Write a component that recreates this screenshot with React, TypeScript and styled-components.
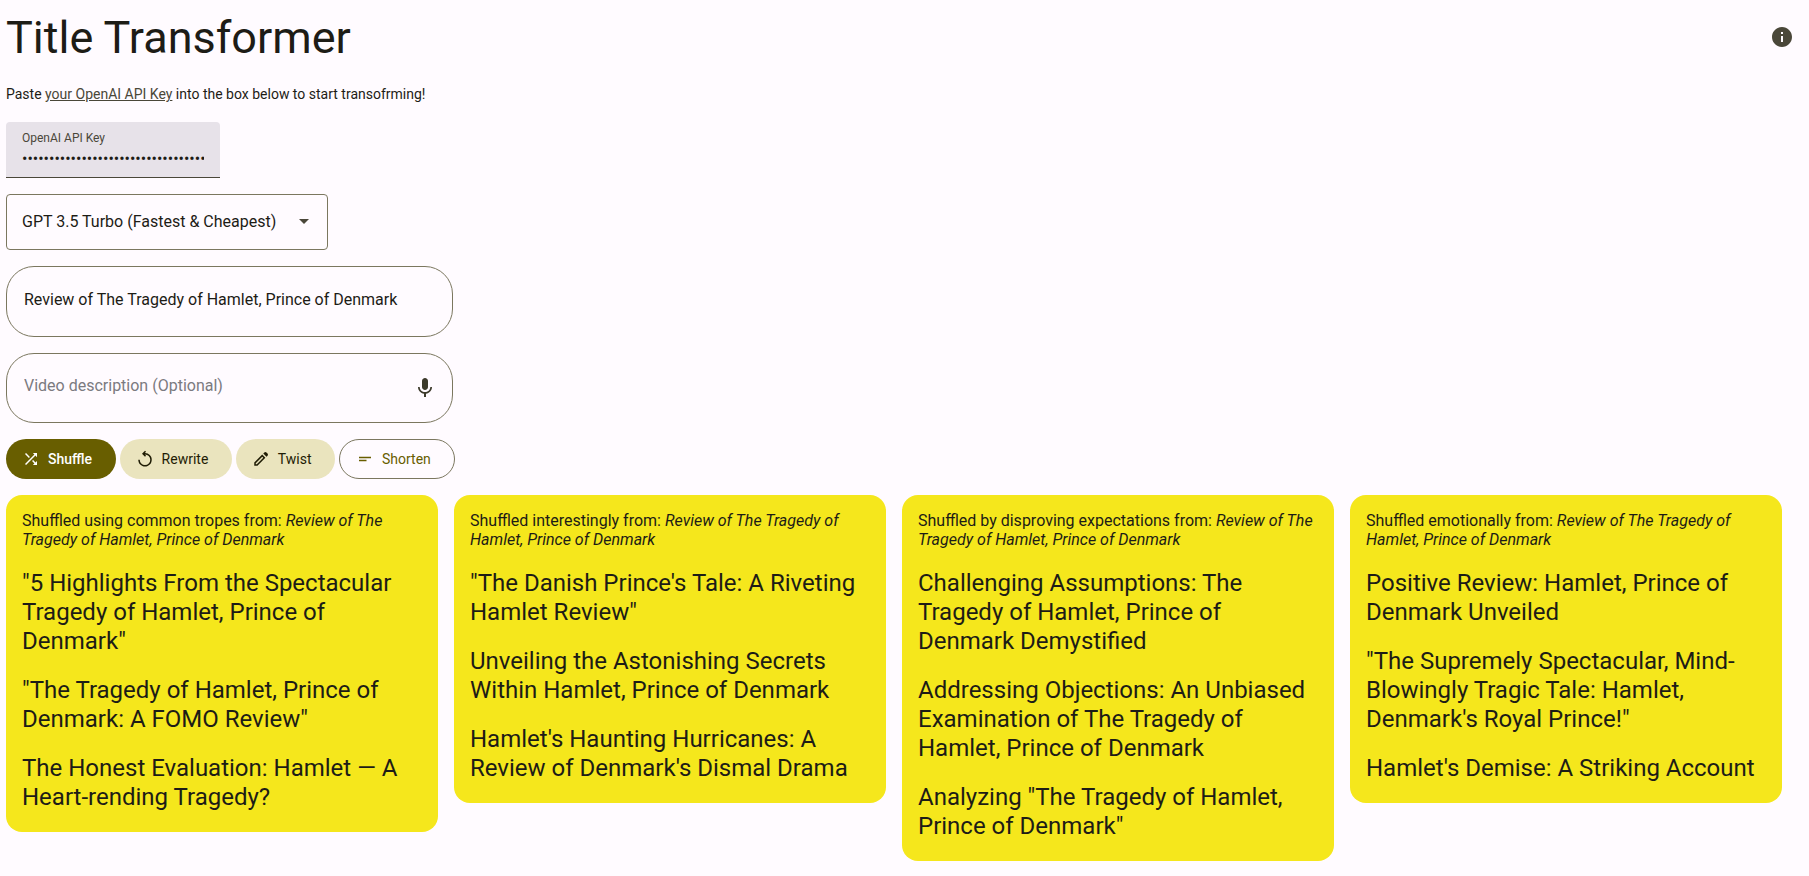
import React from 'react';
import styled, { createGlobalStyle } from 'styled-components';
import { MdArrowDropDown, MdInfo, MdMic, MdShortText, MdShuffle } from 'react-icons/md';

const GlobalStyle = createGlobalStyle`
  html, body {
    margin: 0;
    background: #fffbff;
    color: #1d1c16;
    font-family: Roboto, "Liberation Sans", sans-serif;
  }
  * { box-sizing: border-box; }
`;

const Page = styled.div`
  position: relative;
  display: flex;
  flex-direction: column;
  align-items: flex-start;
  padding: 6px;
  min-height: 876px;
`;

const Title = styled.h1`
  margin: 6px 0 0;
  font-size: 45px;
  line-height: 52px;
  font-weight: 400;
`;

const Intro = styled.p`
  margin: 20px 0 0;
  font-size: 14px;
  line-height: 20px;
  color: #1d1c16;

  a {
    color: #4a4739;
  }
`;

const FilledField = styled.label`
  display: flex;
  flex-direction: column;
  width: 214px;
  height: 56px;
  margin-top: 18px;
  padding: 8px 16px 0;
  background: #e7e2e9;
  border-radius: 4px 4px 0 0;
  border-bottom: 1px solid #4a4739;
`;

const FilledLabel = styled.span`
  font-size: 12px;
  line-height: 16px;
  color: #4a4739;
`;

const FilledInput = styled.input`
  width: 100%;
  margin-top: 1px;
  padding: 0;
  border: 0;
  outline: 0;
  background: transparent;
  font-family: inherit;
  font-size: 16px;
  line-height: 24px;
  color: #1d1c16;
`;

const Select = styled.div`
  display: flex;
  align-items: center;
  justify-content: space-between;
  width: 322px;
  height: 56px;
  margin-top: 16px;
  padding: 0 11px 2px 15px;
  border: 1px solid #7b775f;
  border-radius: 4px;
  font-size: 16px;
`;

const SelectArrow = styled(MdArrowDropDown)`
  color: #4a4739;
`;

const PillField = styled.div<{ $short?: boolean }>`
  display: flex;
  align-items: center;
  width: 447px;
  height: ${(p) => (p.$short ? 70 : 71)}px;
  margin-top: 16px;
  padding: 0 15px 0 17px;
  border: 1px solid #7b775f;
  border-radius: 28px;
`;

const PillInput = styled.input<{ $lift: number }>`
  flex: 1;
  min-width: 0;
  padding: 0 0 ${(p) => p.$lift}px;
  border: 0;
  outline: 0;
  background: transparent;
  font-family: inherit;
  font-size: 16px;
  line-height: 24px;
  color: #1d1c16;

  &::placeholder {
    color: #7b7a80;
    opacity: 1;
  }
`;

const MicIcon = styled(MdMic)`
  color: #3c3a2b;
`;

const ChipRow = styled.div`
  display: flex;
  gap: 4px;
  margin-top: 16px;
`;

const Chip = styled.button<{ $variant: 'selected' | 'tonal' | 'outlined' }>`
  display: flex;
  align-items: center;
  gap: 8px;
  height: 40px;
  padding: 0 23.5px 0 16px;
  border-radius: 20px;
  font-family: inherit;
  font-size: 14px;
  font-weight: ${(p) => (p.$variant === 'selected' ? 500 : 400)};
  background: ${(p) =>
    p.$variant === 'selected' ? '#685e00' : p.$variant === 'tonal' ? '#eae4be' : 'transparent'};
  color: ${(p) =>
    p.$variant === 'selected' ? '#ffffff' : p.$variant === 'tonal' ? '#1f1c05' : '#685e00'};
  border: ${(p) => (p.$variant === 'outlined' ? '1px solid #7b775f' : '0')};
`;

const Cards = styled.div`
  display: flex;
  align-items: flex-start;
  gap: 16px;
  margin-top: 16px;
`;

const Card = styled.section`
  width: 432px;
  padding: 16px 16px 20px;
  background: #f5e71c;
  border-radius: 16px;
`;

const Source = styled.p`
  margin: 0;
  font-size: 16px;
  line-height: 19.2px;
`;

const Result = styled.p`
  margin: 20px 0 0;
  font-size: 24px;
  line-height: 29px;
`;

const InfoButton = styled.div`
  position: absolute;
  top: 25px;
  right: 15px;
  display: flex;
  color: #4a4739;
`;

const RewriteIcon = () => (
  <svg width="18" height="18" viewBox="0 0 24 24" fill="currentColor">
    <path d="M12 22q-1.875 0-3.512-.712-1.638-.713-2.85-1.926-1.213-1.212-1.926-2.85Q3 14.875 3 13h2q0 2.925 2.038 4.962Q9.075 20 12 20t4.962-2.038Q19 15.925 19 13t-2.038-4.962Q14.925 6 12 6h-.15l1.55 1.55L12 9 8 5l4-4 1.4 1.45L11.85 4H12q1.875 0 3.512.712 1.638.713 2.85 1.926 1.213 1.212 1.926 2.85Q21 11.125 21 13t-.712 3.512q-.713 1.638-1.926 2.85-1.212 1.213-2.85 1.926Q13.875 22 12 22Z" />
  </svg>
);

const TwistIcon = () => (
  <svg width="18" height="18" viewBox="0 0 24 24" fill="currentColor">
    <path d="M5 19h1.4l8.625-8.625-1.4-1.4L5 17.6ZM19.3 8.925l-4.25-4.2 1.4-1.4q.575-.575 1.413-.575.837 0 1.412.575l1.4 1.4q.575.575.6 1.388.025.812-.55 1.387ZM17.85 10.4 7.25 21H3v-4.25l10.6-10.6Z" />
  </svg>
);

const source = 'Review of The Tragedy of Hamlet, Prince of Denmark';

const columns = [
  {
    lead: 'Shuffled using common tropes from:',
    titles: [
      '"5 Highlights From the Spectacular Tragedy of Hamlet, Prince of Denmark"',
      '"The Tragedy of Hamlet, Prince of Denmark: A FOMO Review"',
      'The Honest Evaluation: Hamlet — A Heart-rending Tragedy?',
    ],
  },
  {
    lead: 'Shuffled interestingly from:',
    titles: [
      '"The Danish Prince\'s Tale: A Riveting Hamlet Review"',
      'Unveiling the Astonishing Secrets Within Hamlet, Prince of Denmark',
      "Hamlet's Haunting Hurricanes: A Review of Denmark's Dismal Drama",
    ],
  },
  {
    lead: 'Shuffled by disproving expectations from:',
    titles: [
      'Challenging Assumptions: The Tragedy of Hamlet, Prince of Denmark Demystified',
      'Addressing Objections: An Unbiased Examination of The Tragedy of Hamlet, Prince of Denmark',
      'Analyzing "The Tragedy of Hamlet, Prince of Denmark"',
    ],
  },
  {
    lead: 'Shuffled emotionally from:',
    titles: [
      'Positive Review: Hamlet, Prince of Denmark Unveiled',
      '"The Supremely Spectacular, Mind-Blowingly Tragic Tale: Hamlet, Denmark\'s Royal Prince!"',
      "Hamlet's Demise: A Striking Account",
    ],
  },
];

export default function App() {
  return (
    <Page>
      <GlobalStyle />
      <Title>Title Transformer</Title>
      <InfoButton>
        <MdInfo size={24} />
      </InfoButton>
      <Intro>
        Paste <a href="#key">your OpenAI API Key</a> into the box below to start transofrming!
      </Intro>

      <FilledField>
        <FilledLabel>OpenAI API Key</FilledLabel>
        <FilledInput type="password" defaultValue="sk-abcdefghijklmnopqrstuvwxyz012345678" />
      </FilledField>

      <Select>
        GPT 3.5 Turbo (Fastest &amp; Cheapest)
        <SelectArrow size={24} />
      </Select>

      <PillField>
        <PillInput $lift={4} defaultValue={source} />
      </PillField>
      <PillField $short>
        <PillInput $lift={5} placeholder="Video description (Optional)" />
        <MicIcon size={24} />
      </PillField>

      <ChipRow>
        <Chip $variant="selected">
          <MdShuffle size={18} /> Shuffle
        </Chip>
        <Chip $variant="tonal">
          <RewriteIcon /> Rewrite
        </Chip>
        <Chip $variant="tonal">
          <TwistIcon /> Twist
        </Chip>
        <Chip $variant="outlined">
          <MdShortText size={18} /> Shorten
        </Chip>
      </ChipRow>

      <Cards>
        {columns.map((col) => (
          <Card key={col.lead}>
            <Source>
              {col.lead} <em>{source}</em>
            </Source>
            {col.titles.map((t) => (
              <Result key={t}>{t}</Result>
            ))}
          </Card>
        ))}
      </Cards>
    </Page>
  );
}
